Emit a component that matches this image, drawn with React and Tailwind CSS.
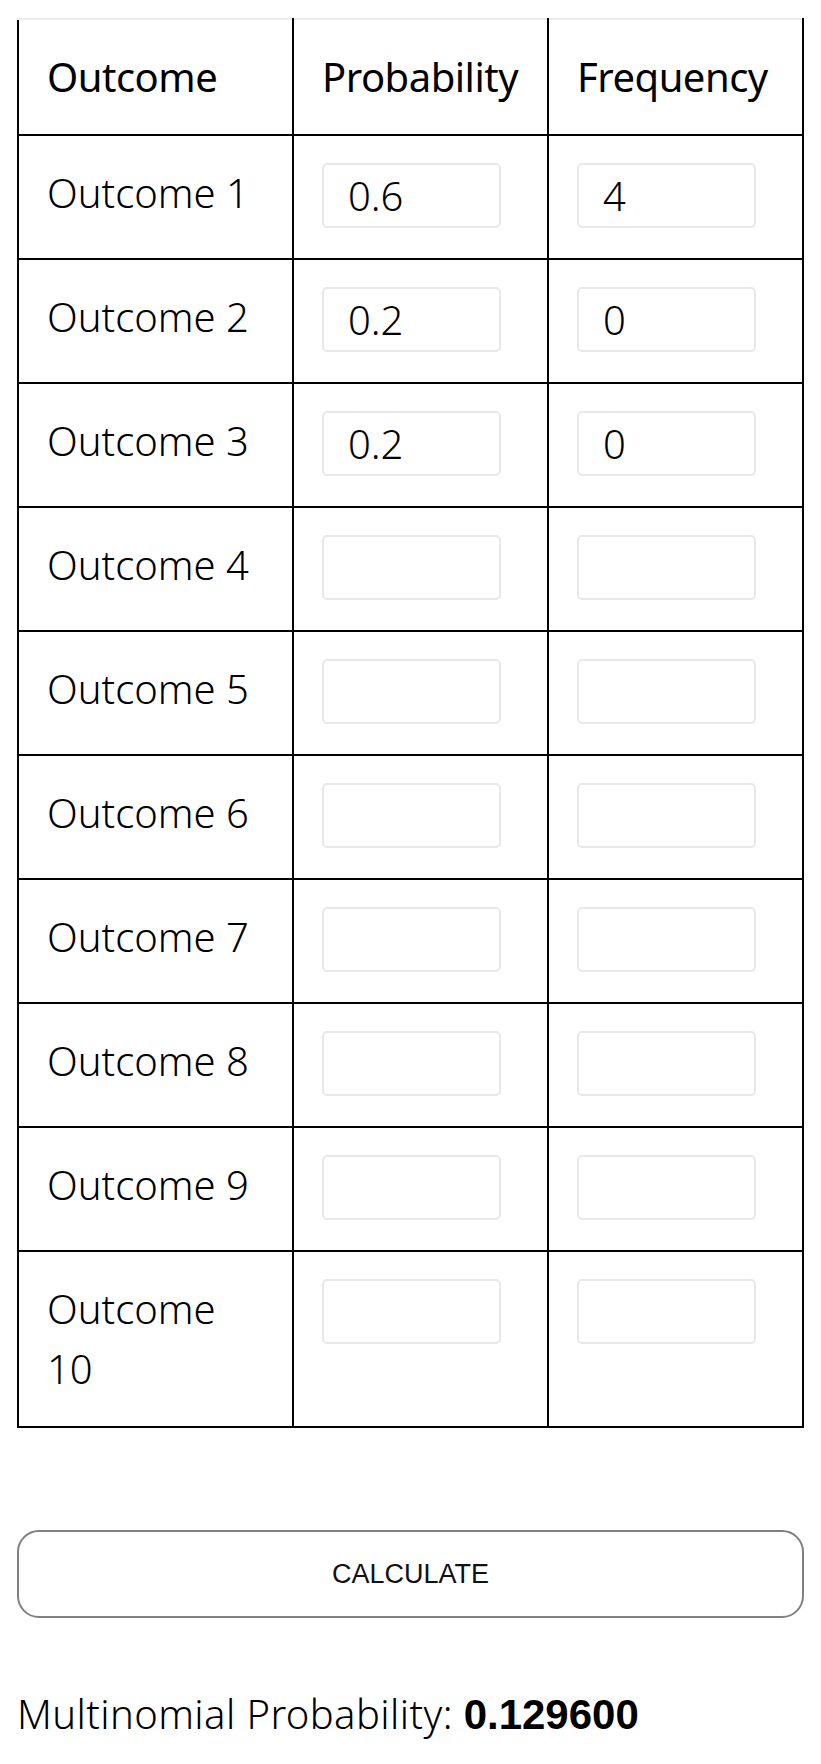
import { useState } from 'react';

const initialProbs = ['0.6', '0.2', '0.2', '', '', '', '', '', '', ''];
const initialFreqs = ['4', '0', '0', '', '', '', '', '', '', ''];

function factorial(n) {
  let r = 1;
  for (let i = 2; i <= n; i++) r *= i;
  return r;
}

export default function App() {
  const [probs, setProbs] = useState(initialProbs);
  const [freqs, setFreqs] = useState(initialFreqs);
  const [result, setResult] = useState('0.129600');

  const calculate = () => {
    let n = 0;
    let denom = 1;
    let prod = 1;
    probs.forEach((p, i) => {
      if (p === '' || freqs[i] === '') return;
      const x = parseInt(freqs[i], 10);
      n += x;
      denom *= factorial(x);
      prod *= Math.pow(parseFloat(p), x);
    });
    setResult(((factorial(n) / denom) * prod).toFixed(6));
  };

  const update = (list, setList, i, v) => {
    const next = [...list];
    next[i] = v;
    setList(next);
  };

  return (
    <div className="min-h-screen bg-white px-[17px] pt-[18px] text-black font-['Noto_Sans',sans-serif]">
      <table className="w-full table-fixed border-collapse text-[40px] leading-[60px]">
        <colgroup>
          <col className="w-[275px]" />
          <col className="w-[255px]" />
          <col />
        </colgroup>
        <thead>
          <tr>
            {['Outcome', 'Probability', 'Frequency'].map((h) => (
              <th
                key={h}
                className="border-2 border-black border-t-[#ebebeb] px-[28px] py-[27px] text-left font-normal tracking-[-0.5px]"
              >
                {h}
              </th>
            ))}
          </tr>
        </thead>
        <tbody>
          {probs.map((p, i) => (
            <tr key={i}>
              <td className="border-2 border-black px-[28px] py-[27px] align-top font-light">
                Outcome {i + 1}
              </td>
              <td className="border-2 border-black px-[28px] pt-[27px] pb-[30px] align-top">
                <input
                  value={p}
                  onChange={(e) => update(probs, setProbs, i, e.target.value)}
                  className="block h-[65px] w-[179px] rounded-[5px] border-2 border-[#e8e8e8] pl-[24px] text-[40px] font-light outline-none"
                />
              </td>
              <td className="border-2 border-black px-[28px] pt-[27px] pb-[30px] align-top">
                <input
                  value={freqs[i]}
                  onChange={(e) => update(freqs, setFreqs, i, e.target.value)}
                  className="block h-[65px] w-[179px] rounded-[5px] border-2 border-[#e8e8e8] pl-[24px] text-[40px] font-light outline-none"
                />
              </td>
            </tr>
          ))}
        </tbody>
      </table>

      <button
        onClick={calculate}
        className="mt-[102px] block h-[88px] w-full rounded-[22px] border-2 border-[#808080] bg-white font-['Liberation_Sans',Arial,sans-serif] text-[27px] text-[#111]"
      >
        CALCULATE
      </button>

      <p className="mt-[66px] text-[40px] leading-[60px] font-light tracking-[0.4px]">
        Multinomial Probability:{' '}
        <span className="font-['Liberation_Sans',Arial,sans-serif] font-bold text-[42px] tracking-normal">{result}</span>
      </p>
    </div>
  );
}
